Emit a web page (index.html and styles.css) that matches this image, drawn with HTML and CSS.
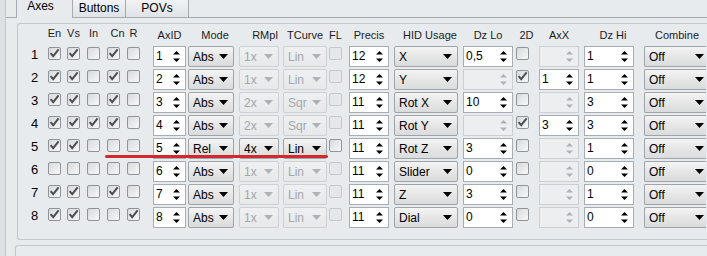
FILE: index.html
```html
<!DOCTYPE html>
<html lang="en">
<head>
  <meta charset="UTF-8" />
  <title>Axes</title>
  <link rel="stylesheet" href="styles.css">
</head>
<body>

  <div class="janela">
    <div class="abas">
      <div class="aba ativa">Axes</div>
      <div class="aba botoes">Buttons</div>
      <div class="aba povs">POVs</div>
    </div>

    <div class="pagina">
      <div class="grupo">
        <div class="grade" id="grade">
          <div></div>
          <div class="cab cb c-cx">En</div>
          <div class="cab cb c-cx">Vs</div>
          <div class="cab cb c-cx">In</div>
          <div class="cab cb c-cx desl">Cn</div>
          <div class="cab cb c-cx">R</div>
          <div class="cab c-id">AxID</div>
          <div class="cab c-modo desl">Mode</div>
          <div class="cab c-rm desl2">RMpl</div>
          <div class="cab c-tc">TCurve</div>
          <div class="cab c-cx">FL</div>
          <div class="cab c-pr">Precis</div>
          <div class="cab c-hid desl">HID Usage</div>
          <div class="cab c-dz">Dz Lo</div>
          <div class="cab c-cx desl">2D</div>
          <div class="cab c-pr">AxX</div>
          <div class="cab c-dz desl">Dz Hi</div>
          <div class="cab c-comb">Combine</div>
        </div>
      </div>
      <div class="grupo baixo"></div>
    </div>
  </div>

  <div class="marca"></div>

  <script>
    const CHECK = '<svg width="11" height="11" viewBox="0 0 11 11"><path d="M1.6 5.2 L4.2 8.2 L9.6 1.4" fill="none" stroke="#4b4e52" stroke-width="2"/></svg>';
    const SETAS = '<svg class="setas" width="7" height="19" viewBox="0 0 7 19"><path d="M0 7.5 L3.5 4 L7 7.5Z M0 11.5 L7 11.5 L3.5 15Z"/></svg>';
    const SETA = '<svg class="seta" width="9" height="5" viewBox="0 0 9 5"><path d="M0 0H9L4.5 5Z"/></svg>';

    const eixos = [
      { c: [1,1,0,1,0], id: 1, modo: 'Abs', rm: '1x', tc: 'Lin', pr: 12, hid: 'X',      lo: '0,5', d2: 0, ax: null, hi: 1 },
      { c: [1,1,0,1,0], id: 2, modo: 'Abs', rm: '1x', tc: 'Lin', pr: 12, hid: 'Y',      lo: null,  d2: 1, ax: '1',  hi: 1 },
      { c: [1,1,0,1,0], id: 3, modo: 'Abs', rm: '2x', tc: 'Sqr', pr: 11, hid: 'Rot X',  lo: '10',  d2: 0, ax: null, hi: 3 },
      { c: [1,1,1,1,0], id: 4, modo: 'Abs', rm: '2x', tc: 'Sqr', pr: 11, hid: 'Rot Y',  lo: null,  d2: 1, ax: '3',  hi: 3 },
      { c: [1,1,0,0,0], id: 5, modo: 'Rel', rm: '4x', tc: 'Lin', pr: 11, hid: 'Rot Z',  lo: '3',   d2: 0, ax: null, hi: 1 },
      { c: [0,0,0,0,0], id: 6, modo: 'Abs', rm: '1x', tc: 'Lin', pr: 11, hid: 'Slider', lo: '0',   d2: 0, ax: null, hi: 0 },
      { c: [1,1,0,1,0], id: 7, modo: 'Abs', rm: '1x', tc: 'Lin', pr: 11, hid: 'Z',      lo: '3',   d2: 0, ax: null, hi: 1 },
      { c: [1,1,0,0,1], id: 8, modo: 'Abs', rm: '1x', tc: 'Lin', pr: 11, hid: 'Dial',   lo: '0',   d2: 0, ax: null, hi: 0 }
    ];

    function caixa(v, off) {
      return `<div class="caixa${off ? ' off' : ''}">${v ? CHECK : ''}</div>`;
    }

    function spin(v, col) {
      if (v === null) return `<div class="spin off ${col}"><span></span>${SETAS}</div>`;
      return `<div class="spin ${col}"><span>${v}</span>${SETAS}</div>`;
    }

    function combo(t, col, off) {
      return `<div class="combo ${col}${off ? ' off' : ''}"><span>${t}</span>${SETA}</div>`;
    }

    const g = document.getElementById('grade');
    eixos.forEach(e => {
      const rel = e.modo === 'Rel';
      g.innerHTML += `
        <div class="num">${e.id}</div>
        ${e.c.map(v => caixa(v)).join('')}
        ${spin(e.id, 'c-id')}
        ${combo(e.modo, 'c-modo')}
        ${combo(e.rm, 'c-rm', !rel)}
        ${combo(e.tc, 'c-tc', !rel)}
        ${caixa(0, !rel)}
        ${spin(e.pr, 'c-pr')}
        ${combo(e.hid, 'c-hid')}
        ${spin(e.lo, 'c-dz')}
        ${caixa(e.d2)}
        ${spin(e.ax, 'c-pr')}
        ${spin(e.hi, 'c-dz')}
        ${combo('Off', 'c-comb')}`;
    });
  </script>
</body>
</html>
```

FILE: styles.css
```css
body {
  margin: 0;
  background: #dce0e4;
  font-family: 'Liberation Sans', Arial, sans-serif;
  font-size: 12px;
  color: #000;
  overflow: hidden;
}

.janela {
  margin-left: 5px;
  height: 256px;
  overflow: hidden;
  border-left: 1px solid #c3c8cd;
  background: #e8ebee;
}

.abas {
  display: flex;
  align-items: flex-end;
  height: 17px;
  padding-left: 10px;
  border-bottom: 1px solid #a4aab0;
}

.aba {
  box-sizing: border-box;
  width: 54px;
  height: 20px;
  margin-left: -1px;
  padding-top: 2px;
  line-height: 16px;
  text-align: center;
  border: 1px solid #a4aab0;
  border-bottom: 0;
  background: linear-gradient(#f3f4f6, #dfe3e7);
}

.aba.ativa {
  width: 57px;
  height: 23px;
  margin-left: 0;
  margin-bottom: -1px;
  padding-right: 8px;
  background: #e8ebee;
  position: relative;
  z-index: 1;
}

.aba.povs {
  width: 64px;
}

.pagina {
  padding-top: 5px;
}

.grupo {
  width: 700px;
  margin-left: 11px;
  padding: 0 0 11px 10px;
  border: 1px solid #c2c7cc;
  border-right: 0;
  border-radius: 3px 0 0 3px;
}

.grupo.baixo {
  width: 692px;
  margin-top: 5px;
  margin-left: 9px;
  height: 20px;
  padding: 0;
  border-bottom: 0;
}

.grade {
  display: grid;
  grid-template-columns: 20px 19px 20px 20px 20px 26px 35px 51px 44px 46px 20px 45px 69px 53px 23px 45px 60px 62px;
  grid-template-rows: 20px;
  grid-auto-rows: 21px;
  row-gap: 2px;
}

.cab {
  display: flex;
  justify-content: center;
  white-space: nowrap;
  padding-top: 3px;
  line-height: 16px;
  font-size: 11px;
  color: #1c1c1c;
}

.cab.cb {
  padding-top: 1px;
}

.cab.desl {
  padding-left: 4px;
}

.cab.desl2 {
  padding-left: 6px;
}

.num {
  padding-left: 3px;
  font-size: 13px;
  line-height: 17px;
}

.c-cx { width: 13px; }
.c-id { width: 33px; }
.c-modo { width: 46px; }
.c-rm { width: 40px; }
.c-tc { width: 44px; }
.c-pr { width: 40px; }
.c-hid { width: 64px; }
.c-dz { width: 50px; }
.c-comb { width: 62px; }

.cab.c-comb {
  width: 66px;
}

.caixa {
  box-sizing: border-box;
  width: 13px;
  height: 13px;
  margin-top: 1px;
  border: 1px solid #8f949a;
  border-radius: 2px;
  background: linear-gradient(135deg, #d6d9dc, #f8f8f8);
}

.caixa svg {
  display: block;
}

.caixa.off {
  border-color: #c5c9cd;
  background: #e5e8eb;
}

.spin {
  box-sizing: border-box;
  height: 21px;
  display: flex;
  align-items: stretch;
  padding-left: 2px;
  background: #fff;
  border: 1px solid #a7adb3;
  color: #000;
}

.spin span {
  line-height: 19px;
}

.spin .setas {
  margin-left: auto;
  margin-right: 5px;
  fill: #000;
}

.spin.off {
  background: #eceef0;
  border-color: #cbcfd3;
}

.spin.off .setas {
  fill: #aeb2b6;
}

.combo {
  box-sizing: border-box;
  height: 21px;
  display: flex;
  align-items: center;
  padding: 0 5px 0 4px;
  border: 1px solid #9ea4aa;
  border-radius: 2px;
  background: linear-gradient(#f4f4f4, #e6e6e6 50%, #dadbdc);
}

.combo.c-comb {
  padding-right: 2px;
  border-right: 0;
  border-radius: 2px 0 0 2px;
}

.combo .seta {
  margin-left: auto;
  fill: #000;
}

.combo.off {
  color: #a3a7ab;
  border-color: #cdd1d5;
  background: linear-gradient(#eef0f2, #e6e8ea);
}

.combo.off .seta {
  fill: #aeb2b6;
}

.marca {
  position: absolute;
  left: 105px;
  top: 155px;
  width: 223px;
  height: 3px;
  border-radius: 2px;
  background: #d2292c;
}
```
